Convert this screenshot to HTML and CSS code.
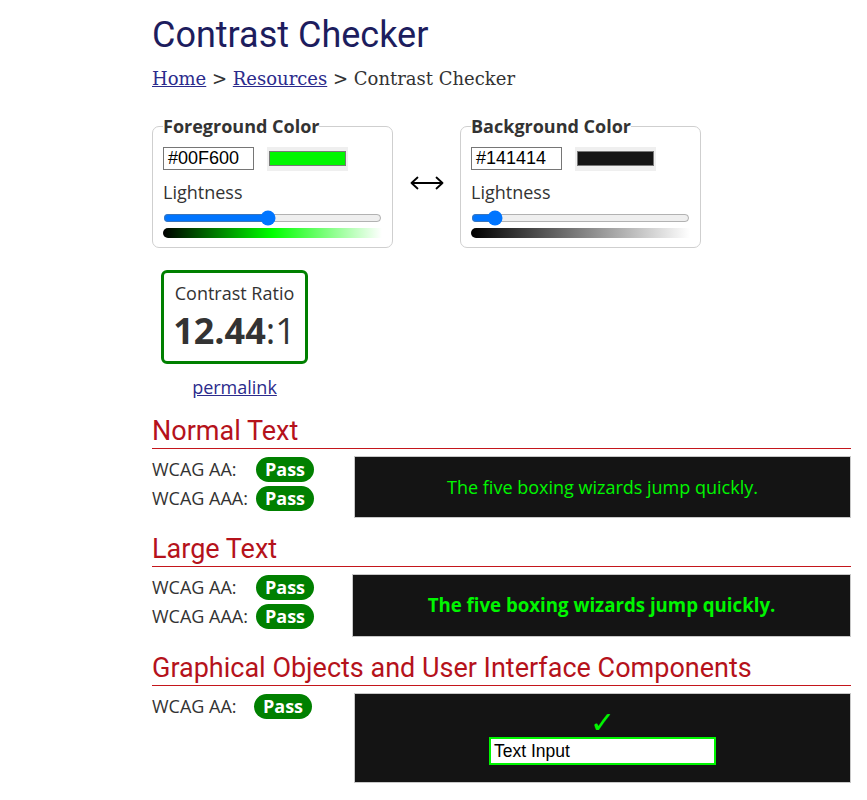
FILE: index.html
```html
<!DOCTYPE html>
<html lang="en">
<head>
<meta charset="utf-8">
<title>Contrast Checker</title>
<link rel="stylesheet" href="styles.css">
</head>
<body>
<main class="page">
  <h1 class="title">Contrast Checker</h1>
  <nav class="crumbs"><a href="#">Home</a> &gt; <a href="#">Resources</a> &gt; Contrast Checker</nav>

  <div class="pickers">
    <fieldset class="picker">
      <legend>Foreground Color</legend>
      <div class="hex-row">
        <div class="hex">#00F600</div>
        <div class="swatch"><div class="swatch-fill swatch-fg"></div></div>
      </div>
      <div class="label">Lightness</div>
      <input class="range" type="range" min="0" max="100" value="48" aria-label="Foreground lightness">
      <div class="grad grad-fg"></div>
    </fieldset>

    <div class="swap" aria-label="Swap colors">
      <svg width="34" height="14" viewBox="0 0 34 14" fill="none" stroke="#000" stroke-width="1.8" stroke-linecap="round" stroke-linejoin="round">
        <path d="M1.5 7 H32.5 M7.5 1.5 L1.5 7 L7.5 12.5 M26.5 1.5 L32.5 7 L26.5 12.5"/>
      </svg>
    </div>

    <fieldset class="picker">
      <legend>Background Color</legend>
      <div class="hex-row">
        <div class="hex">#141414</div>
        <div class="swatch"><div class="swatch-fill swatch-bg"></div></div>
      </div>
      <div class="label">Lightness</div>
      <input class="range" type="range" min="0" max="100" value="8" aria-label="Background lightness">
      <div class="grad grad-bg"></div>
    </fieldset>
  </div>

  <div class="ratio">
    <div class="ratio-box">
      <div class="ratio-label">Contrast Ratio</div>
      <div class="ratio-value"><b>12.44</b>:1</div>
    </div>
    <a class="permalink" href="#">permalink</a>
  </div>

  <section class="sec">
    <h2 class="sec-title">Normal Text</h2>
    <div class="result">
      <div class="checks">
        <span class="lbl">WCAG AA:</span><span class="pill">Pass</span>
        <span class="lbl">WCAG AAA:</span><span class="pill">Pass</span>
      </div>
      <div class="sample">The five boxing wizards jump quickly.</div>
    </div>
  </section>

  <section class="sec">
    <h2 class="sec-title">Large Text</h2>
    <div class="result">
      <div class="checks checks-large">
        <span class="lbl">WCAG AA:</span><span class="pill">Pass</span>
        <span class="lbl">WCAG AAA:</span><span class="pill">Pass</span>
      </div>
      <div class="sample sample-large">The five boxing wizards jump quickly.</div>
    </div>
  </section>

  <section class="sec">
    <h2 class="sec-title">Graphical Objects and User Interface Components</h2>
    <div class="result">
      <div class="checks checks-ui">
        <span class="lbl">WCAG AA:</span><span class="pill">Pass</span>
      </div>
      <div class="sample sample-ui">
        <div class="tick">&#10003;</div>
        <div class="text-input">Text Input</div>
      </div>
    </div>
  </section>
</main>
</body>
</html>
```

FILE: styles.css
```css
* { box-sizing: border-box; }

html, body {
  margin: 0;
  padding: 0;
  background: #fff;
}

body {
  font-family: "Open Sans", "Liberation Sans", sans-serif;
  font-size: 18px;
  color: #333;
}

.page {
  width: 851px;
  padding-left: 152px;
}

.title {
  margin: 0;
  padding-top: 14px;
  font-family: Roboto, "Liberation Sans", sans-serif;
  font-weight: 400;
  font-size: 36px;
  line-height: 42px;
  color: #1d1d5e;
}

.crumbs {
  margin-top: 12px;
  font-family: "DejaVu Serif", "Liberation Serif", serif;
  font-size: 18px;
  line-height: 21px;
  color: #333;
}

.crumbs a {
  color: #2b2b8c;
  text-decoration: underline;
}

.pickers {
  display: flex;
  align-items: center;
  margin-top: 25px;
}

.picker {
  width: 241px;
  margin: 0;
  padding: 9px 10px 9px;
  border: 1px solid #cfcfcf;
  border-radius: 7px;
  min-inline-size: 0;
}

.picker legend {
  padding: 0;
  font-weight: 700;
  font-size: 18px;
  line-height: 24px;
  color: #333;
}

.hex-row {
  display: flex;
  align-items: flex-start;
  gap: 13px;
}

.hex {
  width: 91px;
  height: 23px;
  padding: 0 4px;
  border: 1px solid #767676;
  font-family: "Liberation Sans", Arial, sans-serif;
  font-size: 18px;
  line-height: 21px;
  color: #000;
  background: #fff;
}

.swatch {
  width: 81px;
  height: 24px;
  padding: 4px 2px 5px;
  background: #efefef;
}

.swatch-fill {
  height: 15px;
  border: 1px solid #777;
}

.swatch-fg { background: #00f600; }
.swatch-bg { background: #141414; }

.label {
  margin-top: 9px;
  font-size: 18px;
  line-height: 24px;
  color: #333;
}

.range {
  display: block;
  width: 219px;
  height: 16px;
  margin: 6px 0 2px;
}

.grad {
  height: 10px;
  border-radius: 5px 0 0 5px;
}

.grad-fg {
  background: linear-gradient(to right, #000 0%, #00ff00 50%, #fff 100%);
}

.grad-bg {
  background: linear-gradient(to right, #000 0%, #fff 100%);
}

.swap {
  width: 67px;
  display: flex;
  justify-content: center;
  align-items: center;
  padding-top: 3px;
}

.swap svg { display: block; }

.ratio {
  width: 165px;
  margin-top: 22px;
  text-align: center;
}

.ratio-box {
  display: inline-block;
  width: 147px;
  padding: 8px 0 6px;
  border: 3px solid #008000;
  border-radius: 6px;
  color: #333;
}

.ratio-label {
  font-size: 18px;
  line-height: 24.5px;
}

.ratio-value {
  font-size: 36px;
  line-height: 49px;
  font-weight: 400;
}

.ratio-value b { font-weight: 700; }

.permalink {
  display: block;
  margin-top: 11px;
  font-size: 18px;
  line-height: 24.5px;
  color: #2b2b8c;
}

.sec { margin-top: 17px; }
.sec + .sec { margin-top: 16px; }

.sec-title {
  margin: 0;
  padding-bottom: 1px;
  border-bottom: 1px solid #c4161c;
  font-family: Roboto, "Liberation Sans", sans-serif;
  font-weight: 400;
  font-size: 27px;
  line-height: 31px;
  color: #b5121b;
}

.result {
  display: flex;
  align-items: flex-start;
  margin-top: 7px;
}

.checks {
  width: 202px;
  flex: none;
  display: grid;
  grid-template-columns: 104px auto;
  row-gap: 4px;
  align-items: center;
  justify-items: start;
  padding-top: 1px;
}

.checks-large { width: 200px; }
.checks-ui { grid-template-columns: 102px auto; }

.lbl {
  font-size: 18px;
  line-height: 25px;
  color: #333;
}

.pill {
  display: inline-block;
  height: 25px;
  padding: 0 9px;
  border-radius: 13px;
  background: #008000;
  color: #fff;
  font-weight: 700;
  font-size: 18px;
  line-height: 25px;
}

.sample {
  flex: 1;
  padding: 17.5px 10px;
  background: #141414;
  border: 1px solid #c8c8c8;
  color: #00f600;
  text-align: center;
  font-size: 18px;
  line-height: 24.5px;
}

.sample-large {
  font-weight: 700;
  font-size: 18.67px;
  line-height: 26px;
}

.sample-ui {
  height: 90px;
  padding: 0;
  display: flex;
  flex-direction: column;
  align-items: center;
  justify-content: center;
}

.tick {
  font-family: "DejaVu Sans", sans-serif;
  font-size: 30px;
  line-height: 26px;
  color: #00f600;
  margin-bottom: 1px;
}

.text-input {
  width: 227px;
  height: 28px;
  padding: 0 3px;
  border: 2px solid #00f600;
  background: #fff;
  color: #000;
  text-align: left;
  font-family: "Liberation Sans", Arial, sans-serif;
  font-size: 17.5px;
  line-height: 24px;
}
```
